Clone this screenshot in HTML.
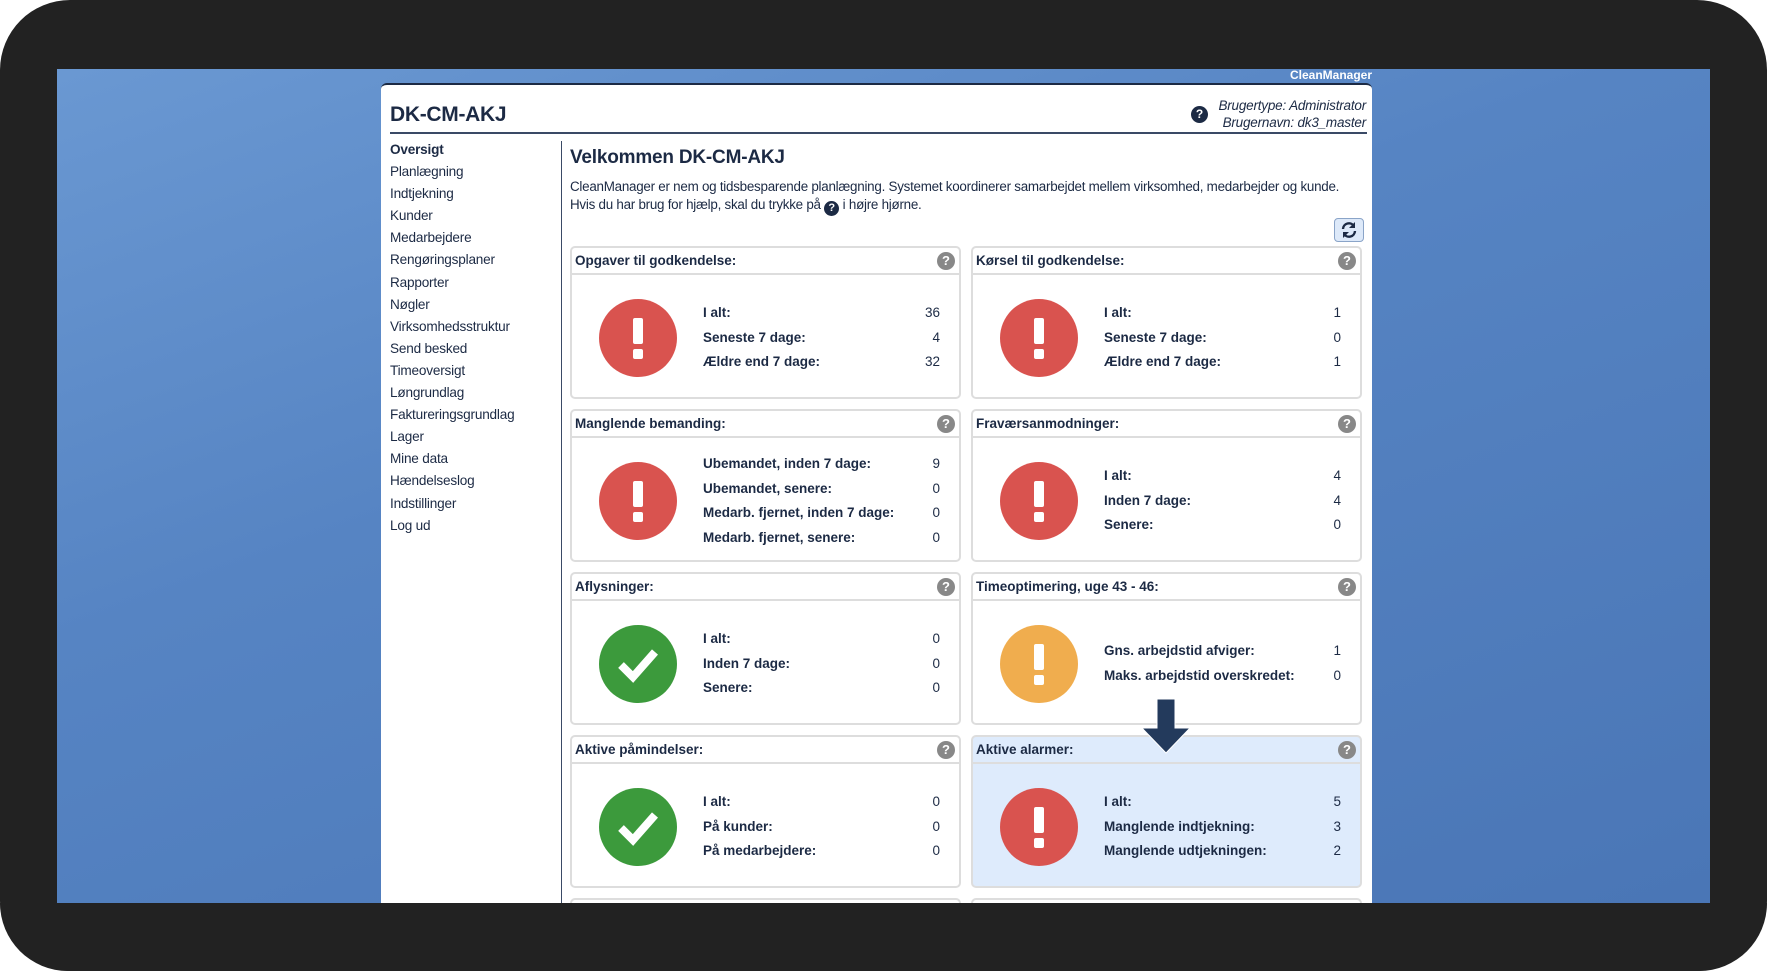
<!DOCTYPE html>
<html><head><meta charset="utf-8"><style>
*{margin:0;padding:0;box-sizing:border-box}
body{width:1767px;height:971px;background:#fff;font-family:"Liberation Sans",sans-serif;color:#1c2a44;overflow:hidden;position:relative}
.frame{position:absolute;left:0;top:0;width:1767px;height:971px;background:#222;border-radius:70px}
.blue{position:absolute;left:57px;top:69px;width:1653px;height:834px;overflow:hidden;background:linear-gradient(160deg,#6a98d2 0%,#5684c3 40%,#4a76b6 100%)}
.cm{position:absolute;right:395px;top:68px;font-size:12px;font-weight:bold;color:#fff}
.win{position:absolute;left:381px;top:83px;width:991px;height:830px;background:#fff;border-radius:6px 6px 0 0;border-top:2px solid #1c2a44}
.title{position:absolute;left:9px;top:18px;font-size:21px;font-weight:bold;letter-spacing:-0.3px}
.hl{position:absolute;left:9px;right:5px;top:47px;border-top:2px solid #3a4a66}
.user{position:absolute;right:6px;top:12px;font-size:13.5px;font-style:italic;text-align:right;line-height:17px;letter-spacing:-0.2px}
.qb{position:absolute;right:164px;top:21px;width:17px;height:17px;border-radius:50%;background:#1c2a44;color:#fff;font-size:12px;font-weight:bold;text-align:center;line-height:17px;font-style:normal}
.side{position:absolute;left:9px;top:54px;font-size:13.6px;line-height:22.1px;letter-spacing:-0.2px}
.vd{position:absolute;left:180px;top:56px;bottom:0;border-left:1px solid #3a4a66}
.wt{position:absolute;left:189px;top:62px;font-size:19px;font-weight:bold;letter-spacing:-0.2px}
.intro{position:absolute;left:189px;top:93px;font-size:13.4px;line-height:17.5px;white-space:nowrap;letter-spacing:-0.25px}
.qi{display:inline-block;width:15px;height:15px;border-radius:50%;background:#1c2a44;color:#fff;font-size:11px;font-weight:bold;text-align:center;line-height:15px;vertical-align:-2px;letter-spacing:0}
.ref{position:absolute;left:953px;top:133px;width:30px;height:24px;border:1px solid #8aa4c8;border-radius:4px;background:#dde9f9}
.card{position:absolute;width:391px;height:153px;border:2px solid #ddd;border-radius:5px;background:#fff}
.card.hi{background:#deebfc}
.ch{height:27px;border-bottom:2px solid #ddd;font-size:13.5px;font-weight:bold;padding:5px 0 0 3px}
.hq{position:absolute;right:4px;top:4px;width:18px;height:18px;border-radius:50%;background:#888;color:#fff;font-size:13px;font-weight:bold;text-align:center;line-height:18px}
.circ{position:absolute;left:27px;top:51px;width:78px;height:78px;border-radius:50%}
.red{background:#d9534f}.grn{background:#3c9a3c}.org{background:#f0ad4e}
.ex{position:absolute;left:34px;top:19px;width:10px;height:26px;background:#fff;border-radius:2px}
.ex2{position:absolute;left:34px;top:50px;width:10px;height:10px;background:#fff;border-radius:2px}
.rows{position:absolute;left:131px;width:237px;font-size:13.5px;font-weight:bold;line-height:24.5px}
.rows div{display:flex;justify-content:space-between}
.rows span:last-child{font-weight:normal}
</style></head><body>
<div class="frame"></div>
<div class="blue"></div>
<div class="cm">CleanManager</div>
<div class="win">
<div class="title">DK-CM-AKJ</div>
<div class="qb">?</div>
<div class="user">Brugertype: Administrator<br>Brugernavn: dk3_master</div>
<div class="hl"></div>
<div class="side"><b>Oversigt</b><br>Planlægning<br>Indtjekning<br>Kunder<br>Medarbejdere<br>Rengøringsplaner<br>Rapporter<br>Nøgler<br>Virksomhedsstruktur<br>Send besked<br>Timeoversigt<br>Løngrundlag<br>Faktureringsgrundlag<br>Lager<br>Mine data<br>Hændelseslog<br>Indstillinger<br>Log ud</div>
<div class="vd"></div>
<div class="wt">Velkommen DK-CM-AKJ</div>
<div class="intro">CleanManager er nem og tidsbesparende planlægning. Systemet koordinerer samarbejdet mellem virksomhed, medarbejder og kunde.<br>Hvis du har brug for hjælp, skal du trykke på <span class="qi">?</span> i højre hjørne.</div>
<div class="ref"><svg width="28" height="22" viewBox="0 0 28 22"><g fill="none" stroke="#1c2a44" stroke-width="2.4"><path d="M8 10a6 6 0 0 1 11-3"/><path d="M20 12a6 6 0 0 1-11 3"/></g><path d="M20 3v6h-6z" fill="#1c2a44"/><path d="M8 19v-6h6z" fill="#1c2a44"/></svg></div>
</div>

<div class="card" style="left:570px;top:246px"><div class="ch">Opgaver til godkendelse:</div><div class="hq">?</div><div class="circ red"><div class="ex"></div><div class="ex2"></div></div><div class="rows" style="top:53px"><div><span>I alt:</span><span>36</span></div><div><span>Seneste 7 dage:</span><span>4</span></div><div><span>Ældre end 7 dage:</span><span>32</span></div></div></div>
<div class="card" style="left:971px;top:246px"><div class="ch">Kørsel til godkendelse:</div><div class="hq">?</div><div class="circ red"><div class="ex"></div><div class="ex2"></div></div><div class="rows" style="top:53px"><div><span>I alt:</span><span>1</span></div><div><span>Seneste 7 dage:</span><span>0</span></div><div><span>Ældre end 7 dage:</span><span>1</span></div></div></div>

<div class="card" style="left:570px;top:409px"><div class="ch">Manglende bemanding:</div><div class="hq">?</div><div class="circ red"><div class="ex"></div><div class="ex2"></div></div><div class="rows" style="top:41px"><div><span>Ubemandet, inden 7 dage:</span><span>9</span></div><div><span>Ubemandet, senere:</span><span>0</span></div><div><span>Medarb. fjernet, inden 7 dage:</span><span>0</span></div><div><span>Medarb. fjernet, senere:</span><span>0</span></div></div></div>
<div class="card" style="left:971px;top:409px"><div class="ch">Fraværsanmodninger:</div><div class="hq">?</div><div class="circ red"><div class="ex"></div><div class="ex2"></div></div><div class="rows" style="top:53px"><div><span>I alt:</span><span>4</span></div><div><span>Inden 7 dage:</span><span>4</span></div><div><span>Senere:</span><span>0</span></div></div></div>

<div class="card" style="left:570px;top:572px"><div class="ch">Aflysninger:</div><div class="hq">?</div><div class="circ grn"><svg width="78" height="78" viewBox="0 0 78 78"><path d="M22 40l12 12 22-25" fill="none" stroke="#fff" stroke-width="8"/></svg></div><div class="rows" style="top:53px"><div><span>I alt:</span><span>0</span></div><div><span>Inden 7 dage:</span><span>0</span></div><div><span>Senere:</span><span>0</span></div></div></div>
<div class="card" style="left:971px;top:572px"><div class="ch">Timeoptimering, uge 43 - 46:</div><div class="hq">?</div><div class="circ org"><div class="ex"></div><div class="ex2"></div></div><div class="rows" style="top:65px"><div><span>Gns. arbejdstid afviger:</span><span>1</span></div><div><span>Maks. arbejdstid overskredet:</span><span>0</span></div></div></div>

<div class="card" style="left:570px;top:735px"><div class="ch">Aktive påmindelser:</div><div class="hq">?</div><div class="circ grn"><svg width="78" height="78" viewBox="0 0 78 78"><path d="M22 40l12 12 22-25" fill="none" stroke="#fff" stroke-width="8"/></svg></div><div class="rows" style="top:53px"><div><span>I alt:</span><span>0</span></div><div><span>På kunder:</span><span>0</span></div><div><span>På medarbejdere:</span><span>0</span></div></div></div>
<div class="card hi" style="left:971px;top:735px"><div class="ch">Aktive alarmer:</div><div class="hq">?</div><div class="circ red"><div class="ex"></div><div class="ex2"></div></div><div class="rows" style="top:53px"><div><span>I alt:</span><span>5</span></div><div><span>Manglende indtjekning:</span><span>3</span></div><div><span>Manglende udtjekningen:</span><span>2</span></div></div></div>

<div class="card" style="left:570px;top:898px;height:10px"></div>
<div class="card" style="left:971px;top:898px;height:10px"></div>
<div style="position:absolute;left:0;top:903px;width:1767px;height:68px;background:#222;border-radius:0 0 70px 70px"></div>
<svg style="position:absolute;left:1140px;top:698px" width="56" height="58"><path d="M13 1h18v29h15L22 55 -2 30h15z" transform="translate(4,0)" fill="#233a5c" stroke="#fff" stroke-width="1"/></svg>
</body></html>
